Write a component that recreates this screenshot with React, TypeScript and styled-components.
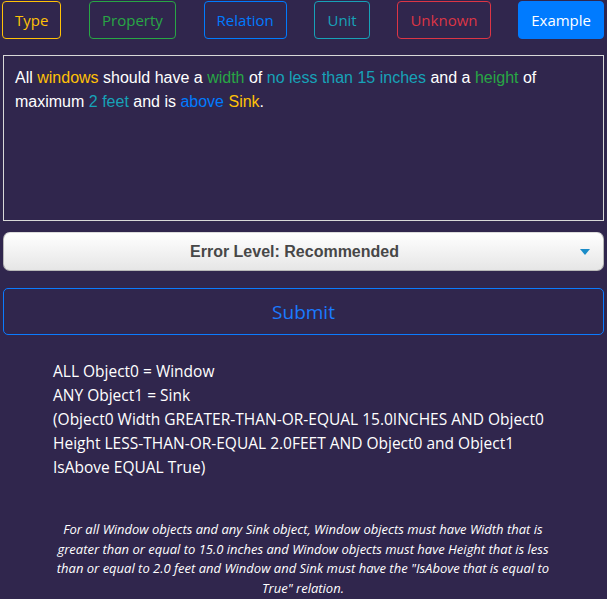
import React from "react";
import styled, { createGlobalStyle, css } from "styled-components";

const GlobalStyle = createGlobalStyle`
  html, body { margin: 0; padding: 0; background: #30264d; }
  body { font-family: "Open Sans", "Noto Sans", sans-serif; }
  * { box-sizing: border-box; }
`;

const COLORS = {
  warning: "#ffc107",
  success: "#28a745",
  primary: "#007bff",
  info: "#17a2b8",
  danger: "#dc3545",
};

type Variant = keyof typeof COLORS;

const Page = styled.div`
  padding: 1px 3px 0 2px;
  display: flex;
  flex-direction: column;
`;

const Toolbar = styled.div`
  display: flex;
  justify-content: space-between;
  align-items: center;
`;

const TagButton = styled.button<{ $variant: Variant; $filled?: boolean }>`
  font-family: "Open Sans", "Noto Sans", sans-serif;
  font-size: 15px;
  line-height: 24px;
  height: 38px;
  padding: 6px 12px;
  border-radius: 4px;
  border: 1px solid ${(p) => COLORS[p.$variant]};
  color: ${(p) => COLORS[p.$variant]};
  background: transparent;
  cursor: pointer;
  ${(p) =>
    p.$filled &&
    css`
      background: ${COLORS[p.$variant]};
      color: #fff;
    `}
`;

const Editor = styled.div`
  margin: 16px 0 0 1px;
  height: 166px;
  border: 1px solid #d8d8d8;
  padding: 10px 11px;
  font-family: "Liberation Sans", Arial, sans-serif;
  font-size: 16px;
  line-height: 24px;
  color: #fff;
`;

const Token = styled.span<{ $variant: Variant }>`
  color: ${(p) => COLORS[p.$variant]};
`;

const SelectBox = styled.div`
  position: relative;
  margin: 11px 0 0 1px;
  height: 39px;
  padding-right: 18px;
  border-radius: 7px;
  border: 1px solid #b8b8b8;
  border-top-color: #dcdcdc;
  background: linear-gradient(#ffffff, #e6e6e6);
  display: flex;
  align-items: center;
  justify-content: center;
  font-family: "Liberation Sans", Arial, sans-serif;
  font-weight: bold;
  font-size: 16px;
  color: #474747;
`;

const Caret = styled.svg`
  position: absolute;
  right: 13px;
  top: 16px;
`;

const SubmitButton = styled.button`
  margin: 17px 0 0 1px;
  height: 47px;
  border: 1px solid #0b7bff;
  border-radius: 5px;
  background: transparent;
  color: #1a7bff;
  font-family: "Open Sans", "Noto Sans", sans-serif;
  font-size: 19px;
  cursor: pointer;
`;

const Result = styled.div`
  margin: 24px 0 0 51px;
  width: 500px;
  font-family: "Open Sans", "Noto Sans", sans-serif;
  font-size: 15.5px;
  line-height: 24px;
  color: #fff;
`;

const Line = styled.div``;

const Description = styled.p`
  margin: 41px auto 0;
  width: 496px;
  text-align: center;
  font-family: "Open Sans", "Noto Sans", sans-serif;
  font-style: italic;
  font-size: 13px;
  line-height: 19.5px;
  color: #fff;
`;

export default function App() {
  return (
    <>
      <GlobalStyle />
      <Page>
        <Toolbar>
          <TagButton $variant="warning">Type</TagButton>
          <TagButton $variant="success">Property</TagButton>
          <TagButton $variant="primary">Relation</TagButton>
          <TagButton $variant="info">Unit</TagButton>
          <TagButton $variant="danger">Unknown</TagButton>
          <TagButton $variant="primary" $filled>
            Example
          </TagButton>
        </Toolbar>
        <Editor>
          All <Token $variant="warning">windows</Token> should have a{" "}
          <Token $variant="success">width</Token> of{" "}
          <Token $variant="info">no less than 15 inches</Token> and a{" "}
          <Token $variant="success">height</Token> of maximum{" "}
          <Token $variant="info">2 feet</Token> and is{" "}
          <Token $variant="primary">above</Token>{" "}
          <Token $variant="warning">Sink</Token>.
        </Editor>
        <SelectBox>
          Error Level: Recommended
          <Caret width="10" height="6" viewBox="0 0 10 6">
            <polygon points="0,0 10,0 5,6" fill="#1a8cc8" />
          </Caret>
        </SelectBox>
        <SubmitButton>Submit</SubmitButton>
        <Result>
          <Line>ALL Object0 = Window</Line>
          <Line>ANY Object1 = Sink</Line>
          <Line>
            (Object0 Width GREATER-THAN-OR-EQUAL 15.0INCHES AND Object0 Height
            LESS-THAN-OR-EQUAL 2.0FEET AND Object0 and Object1 IsAbove EQUAL
            True)
          </Line>
        </Result>
        <Description>
          For all Window objects and any Sink object, Window objects must have
          Width that is greater than or equal to 15.0 inches and Window objects
          must have Height that is less than or equal to 2.0 feet and Window and
          Sink must have the "IsAbove that is equal to True" relation.
        </Description>
      </Page>
    </>
  );
}
